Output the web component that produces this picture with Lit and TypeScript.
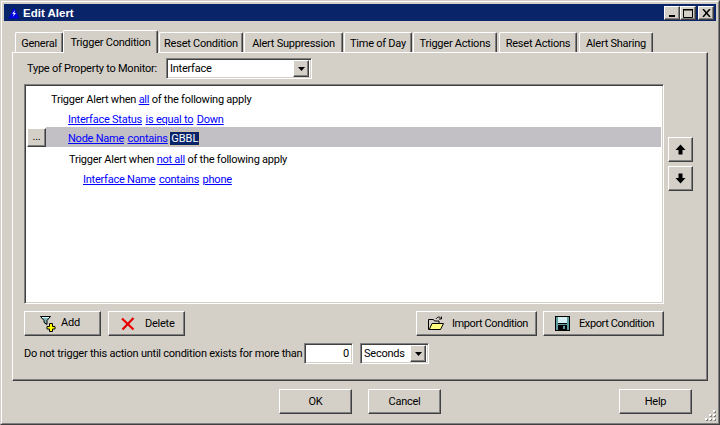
import { LitElement, html, css, svg } from "lit";
import { customElement } from "lit/decorators.js";

const TABS = [
  { t: "General", w: 48, m: 0 },
  { t: "Trigger Condition", w: 95, m: 0, active: true },
  { t: "Reset Condition", w: 84, m: 1 },
  { t: "Alert Suppression", w: 99, m: 1 },
  { t: "Time of Day", w: 68, m: 1 },
  { t: "Trigger Actions", w: 84, m: 1 },
  { t: "Reset Actions", w: 78, m: 2 },
  { t: "Alert Sharing", w: 74, m: 2 },
];

const arrowDown = svg`<svg width="7" height="4" viewBox="0 0 7 4"><path d="M0 0h7L3.5 4z" fill="#000"/></svg>`;

const GRIP: [number, number][] = [[8, 0], [4, 4], [8, 4], [0, 8], [4, 8], [8, 8]];

@customElement("app-root")
export class AppRoot extends LitElement {
  static styles = css`
    :host {
      display: block;
      width: 720px;
      height: 425px;
      box-sizing: border-box;
      background: #d4d0c8;
      font: 11px Roboto, "Liberation Sans", Arial, sans-serif;
      letter-spacing: -0.24px;
      color: #000;
      border-style: solid;
      border-width: 1px;
      border-color: #d4d0c8 #404040 #404040 #d4d0c8;
      overflow: hidden;
    }
    .frame {
      position: relative;
      height: 100%;
      box-sizing: border-box;
      border-style: solid;
      border-width: 1px;
      border-color: #fff #808080 #808080 #fff;
      padding: 2px;
      display: flex;
      flex-direction: column;
    }
    .title {
      height: 17px;
      background: #0a246a;
      display: flex;
      align-items: center;
      padding: 0 2px 0 4px;
      color: #fff;
      font: bold 11.5px "Liberation Sans", Arial, sans-serif;
      letter-spacing: 0;
      flex: none;
    }
    .title-icon { margin-right: 3px; flex: none; }
    .title-text { flex: 1; }
    .wbtn {
      width: 16px;
      height: 14px;
      box-sizing: border-box;
      display: flex;
      align-items: center;
      justify-content: center;
      flex: none;
    }
    .raised {
      background: #d4d0c8;
      border-style: solid;
      border-width: 1px;
      border-color: #fff #404040 #404040 #fff;
      box-shadow: inset -1px -1px 0 #808080;
      box-sizing: border-box;
    }
    .sunken {
      background: #fff;
      border-style: solid;
      border-width: 1px;
      border-color: #808080 #fff #fff #808080;
      box-shadow: inset 1px 1px 0 #404040, inset -1px -1px 0 #d4d0c8;
      box-sizing: border-box;
    }
    .wbtn.close { margin-left: 2px; }
    .body {
      flex: 1;
      display: flex;
      flex-direction: column;
      padding: 9px 8px 0 8px;
      min-height: 0;
    }
    .tabs {
      display: flex;
      padding-left: 3px;
      height: 22px;
      flex: none;
      position: relative;
      z-index: 1;
    }
    .tab {
      box-sizing: border-box;
      height: 20px;
      margin-top: 2px;
      background: #d4d0c8;
      border-top: 1px solid #fff;
      border-left: 1px solid #fff;
      border-right: 1px solid #404040;
      box-shadow: inset -1px 0 0 #808080;
      border-radius: 2px 2px 0 0;
      display: flex;
      align-items: center;
      justify-content: center;
      padding-top: 2px;
      white-space: nowrap;
    }
    .tab.active {
      height: 23px;
      margin-top: 0;
      padding: 0;
    }
    .panel {
      box-sizing: border-box;
      width: 696px;
      height: 329px;
      flex: none;
      background: #d4d0c8;
      border-style: solid;
      border-width: 1px;
      border-color: #fff #404040 #404040 #fff;
      box-shadow: inset -1px -1px 0 #808080;
      padding: 5px 0 0 11px;
      display: flex;
      flex-direction: column;
    }
    .prop-row {
      display: flex;
      align-items: center;
      height: 21px;
      flex: none;
    }
    .prop-label { width: 142px; padding-left: 3px; box-sizing: border-box; white-space: nowrap; }
    .combo {
      height: 21px;
      display: flex;
      align-items: center;
      justify-content: space-between;
      padding: 0 2px 0 3px;
      flex: none;
    }
    .combo-prop { width: 146px; }
    .combo-unit { width: 69px; height: 21px; margin-left: 7px; }
    .drop {
      width: 16px;
      height: 17px;
      display: flex;
      align-items: center;
      justify-content: center;
      box-sizing: border-box;
      flex: none;
    }
    .list-row {
      display: flex;
      gap: 4px;
      margin-top: 5px;
      flex: none;
    }
    .list {
      width: 640px;
      height: 220px;
      padding: 1px;
      flex: none;
    }
    .rows { padding-top: 1px; }
    .row {
      height: 20px;
      display: flex;
      align-items: stretch;
    }
    .gutter {
      width: 20px;
      flex: none;
      display: flex;
      align-items: center;
      padding-left: 1px;
      box-sizing: border-box;
    }
    .dots {
      width: 19px;
      height: 19px;
      display: flex;
      align-items: center;
      justify-content: center;
      padding-bottom: 2px;
    }
    .cell {
      width: 615px;
      display: flex;
      align-items: center;
      box-sizing: border-box;
      padding-top: 4px;
      white-space: pre;
    }
    .row.sel .cell { background: #c2bfc5; padding-top: 2px; }
    .l0 { padding-left: 5px; }
    .l1 { padding-left: 22px; }
    .l1b { padding-left: 23px; }
    .l2 { padding-left: 37px; }
    a { color: #0000ff; text-decoration: underline; }
    a + a { margin-left: 1px; }
    .edit {
      display: inline-block;
      background: #0a246a;
      color: #fff;
      outline: 1px dotted #d8c890;
      padding: 0 1px;
      line-height: 13px;
      letter-spacing: 0;
    }
    .side {
      display: flex;
      flex-direction: column;
      gap: 4px;
      padding-top: 53px;
    }
    .ibtn {
      width: 25px;
      height: 25px;
      display: flex;
      align-items: center;
      justify-content: center;
    }
    .actions {
      display: flex;
      margin-top: 7px;
      width: 640px;
      height: 25px;
      flex: none;
    }
    .btn {
      height: 25px;
      display: flex;
      align-items: center;
      flex: none;
      white-space: nowrap;
    }
    .add { width: 77px; padding-left: 15px; }
    .add svg { margin-right: 5px; }
    .add span { margin-bottom: 2px; }
    .del { width: 77px; margin-left: 7px; padding-left: 12px; }
    .del svg { margin-right: 10px; }
    .imp { width: 121px; margin-left: auto; padding-left: 11px; letter-spacing: -0.4px; }
    .imp svg { margin-right: 7px; }
    .exp { width: 121px; margin-left: 6px; padding-left: 11px; letter-spacing: -0.4px; }
    .exp svg { margin-right: 9px; }
    .delay {
      display: flex;
      align-items: center;
      margin-top: 7px;
      height: 21px;
      flex: none;
    }
    .delay-label { width: 280px; white-space: nowrap; }
    .num {
      width: 49px;
      height: 21px;
      display: flex;
      align-items: center;
      justify-content: flex-end;
      padding-right: 3px;
      padding-bottom: 1px;
    }
    .footer {
      display: flex;
      padding: 8px 0 0 267px;
      flex: none;
    }
    .fbtn {
      width: 73px;
      height: 25px;
      display: flex;
      align-items: center;
      justify-content: center;
      flex: none;
    }
    .fbtn + .fbtn { margin-left: 16px; }
    .fbtn.help { margin-left: 178px; }
    .grip {
      position: absolute;
      right: 2px;
      bottom: 2px;
    }
  `;

  private icon() {
    return html`<svg class="title-icon" width="12" height="12" viewBox="0 0 12 12">
      <path d="M6 0.5 11.5 11.5H0.5z" fill="#0000e0"/>
      <path d="M7 3 4.2 6.8H6L4.6 10 8 6H6.2z" fill="#fff"/>
    </svg>`;
  }

  private row(cls: string, content: unknown, sel = false) {
    return html`<div class="row ${sel ? "sel" : ""}">
      <div class="gutter">${sel ? html`<div class="dots raised">...</div>` : ""}</div>
      <div class="cell ${cls}"><span>${content}</span></div>
    </div>`;
  }

  render() {
    return html`
      <div class="frame">
        <div class="title">
          ${this.icon()}
          <span class="title-text">Edit Alert</span>
          <div class="wbtn raised">
            <svg width="8" height="8" viewBox="0 0 8 8"><rect x="1" y="6" width="6" height="2" fill="#000"/></svg>
          </div>
          <div class="wbtn raised">
            <svg width="10" height="10" viewBox="0 0 10 10"><path d="M0.5 1.5h9v8h-9z" fill="none" stroke="#000"/><rect x="0" y="1" width="10" height="1.5" fill="#000"/></svg>
          </div>
          <div class="wbtn raised close">
            <svg width="9" height="8" viewBox="0 0 9 8"><path d="M1 0 8 8M8 0 1 8" stroke="#000" stroke-width="1.5"/></svg>
          </div>
        </div>
        <div class="body">
          <div class="tabs">
            ${TABS.map(
              (t) => html`<div class="tab ${t.active ? "active" : ""}" style="width:${t.w}px;margin-left:${t.m}px">${t.t}</div>`
            )}
          </div>
          <div class="panel">
            <div class="prop-row">
              <div class="prop-label">Type of Property to Monitor:</div>
              <div class="combo combo-prop sunken">
                <span>Interface</span>
                <div class="drop raised">${arrowDown}</div>
              </div>
            </div>
            <div class="list-row">
              <div class="list sunken">
                <div class="rows">
                  ${this.row("l0", html`Trigger Alert when <a>all</a> of the following apply`)}
                  ${this.row("l1", html`<a>Interface Status</a> <a>is equal to</a> <a>Down</a>`)}
                  ${this.row("l1", html`<a>Node Name</a> <a>contains</a> <span class="edit">GBBL</span>`, true)}
                  ${this.row("l1b", html`Trigger Alert when <a>not all</a> of the following apply`)}
                  ${this.row("l2", html`<a>Interface Name</a> <a>contains</a> <a>phone</a>`)}
                </div>
              </div>
              <div class="side">
                <div class="ibtn raised">
                  <svg width="11" height="11" viewBox="0 0 11 11"><path d="M5.5 0.5 10.5 6H7.5V10.5H3.5V6H0.5z" fill="#000"/></svg>
                </div>
                <div class="ibtn raised">
                  <svg width="11" height="11" viewBox="0 0 11 11"><path d="M5.5 10.5 0.5 5H3.5V0.5H7.5V5H10.5z" fill="#000"/></svg>
                </div>
              </div>
            </div>
            <div class="actions">
              <div class="btn raised add">
                <svg width="16" height="16" viewBox="0 0 16 16">
                  <path d="M0.5 0.5H10.5L7 4.5V8.5L4 6.5V4.5z" fill="#7fb0b0" stroke="#000"/>
                  <path d="M2 1.5H9" stroke="#d0ffff"/>
                  <path d="M9.5 7.5h3v3h2.5v2.5h-2.5v2.5h-3V13H7v-2.5h2.5z" fill="#ffff00" stroke="#000"/>
                </svg>
                <span>Add</span>
              </div>
              <div class="btn raised del">
                <svg width="14" height="14" viewBox="0 0 14 14">
                  <path d="M1 1.5 12.5 12.5" stroke="#f00000" stroke-width="2.2"/>
                  <path d="M12.5 1 1.5 12.5" stroke="#e00000" stroke-width="2.2"/>
                </svg>
                <span>Delete</span>
              </div>
              <div class="btn raised imp">
                <svg width="17" height="15" viewBox="0 0 17 15">
                  <path d="M0.5 4.5V13.5H12.5L15.5 7.5H4L1.5 13" fill="#ffff80" stroke="#000"/>
                  <path d="M0.5 5V3.5H5.5L6.5 5H11V7.5" fill="none" stroke="#000"/>
                  <path d="M8 3C9.5 0.5 12 0.5 13 2.5M13.5 0.5V3H11" fill="none" stroke="#000"/>
                </svg>
                <span>Import Condition</span>
              </div>
              <div class="btn raised exp">
                <svg width="15" height="15" viewBox="0 0 15 15">
                  <rect x="0.5" y="0.5" width="14" height="14" fill="#5f9f9f" stroke="#000"/>
                  <rect x="3" y="1" width="9" height="6" fill="#d4f0f0"/>
                  <path d="M3 7.5H12" stroke="#000"/>
                  <rect x="3" y="9" width="9" height="5.5" fill="#000"/>
                  <rect x="8" y="10" width="2" height="3" fill="#5f9f9f"/>
                </svg>
                <span>Export Condition</span>
              </div>
            </div>
            <div class="delay">
              <div class="delay-label">Do not trigger this action until condition exists for more than</div>
              <div class="num sunken">0</div>
              <div class="combo combo-unit sunken">
                <span>Seconds</span>
                <div class="drop raised">${arrowDown}</div>
              </div>
            </div>
          </div>
          <div class="footer">
            <div class="fbtn raised">OK</div>
            <div class="fbtn raised">Cancel</div>
            <div class="fbtn raised help">Help</div>
          </div>
        </div>
        <svg class="grip" width="11" height="11" viewBox="0 0 11 11">
          ${GRIP.map(([x, y]) => svg`<rect x="${x + 1}" y="${y + 1}" width="2" height="2" fill="#808080"/><rect x="${x}" y="${y}" width="2" height="2" fill="#fff"/>`)}
        </svg>
      </div>
    `;
  }
}
